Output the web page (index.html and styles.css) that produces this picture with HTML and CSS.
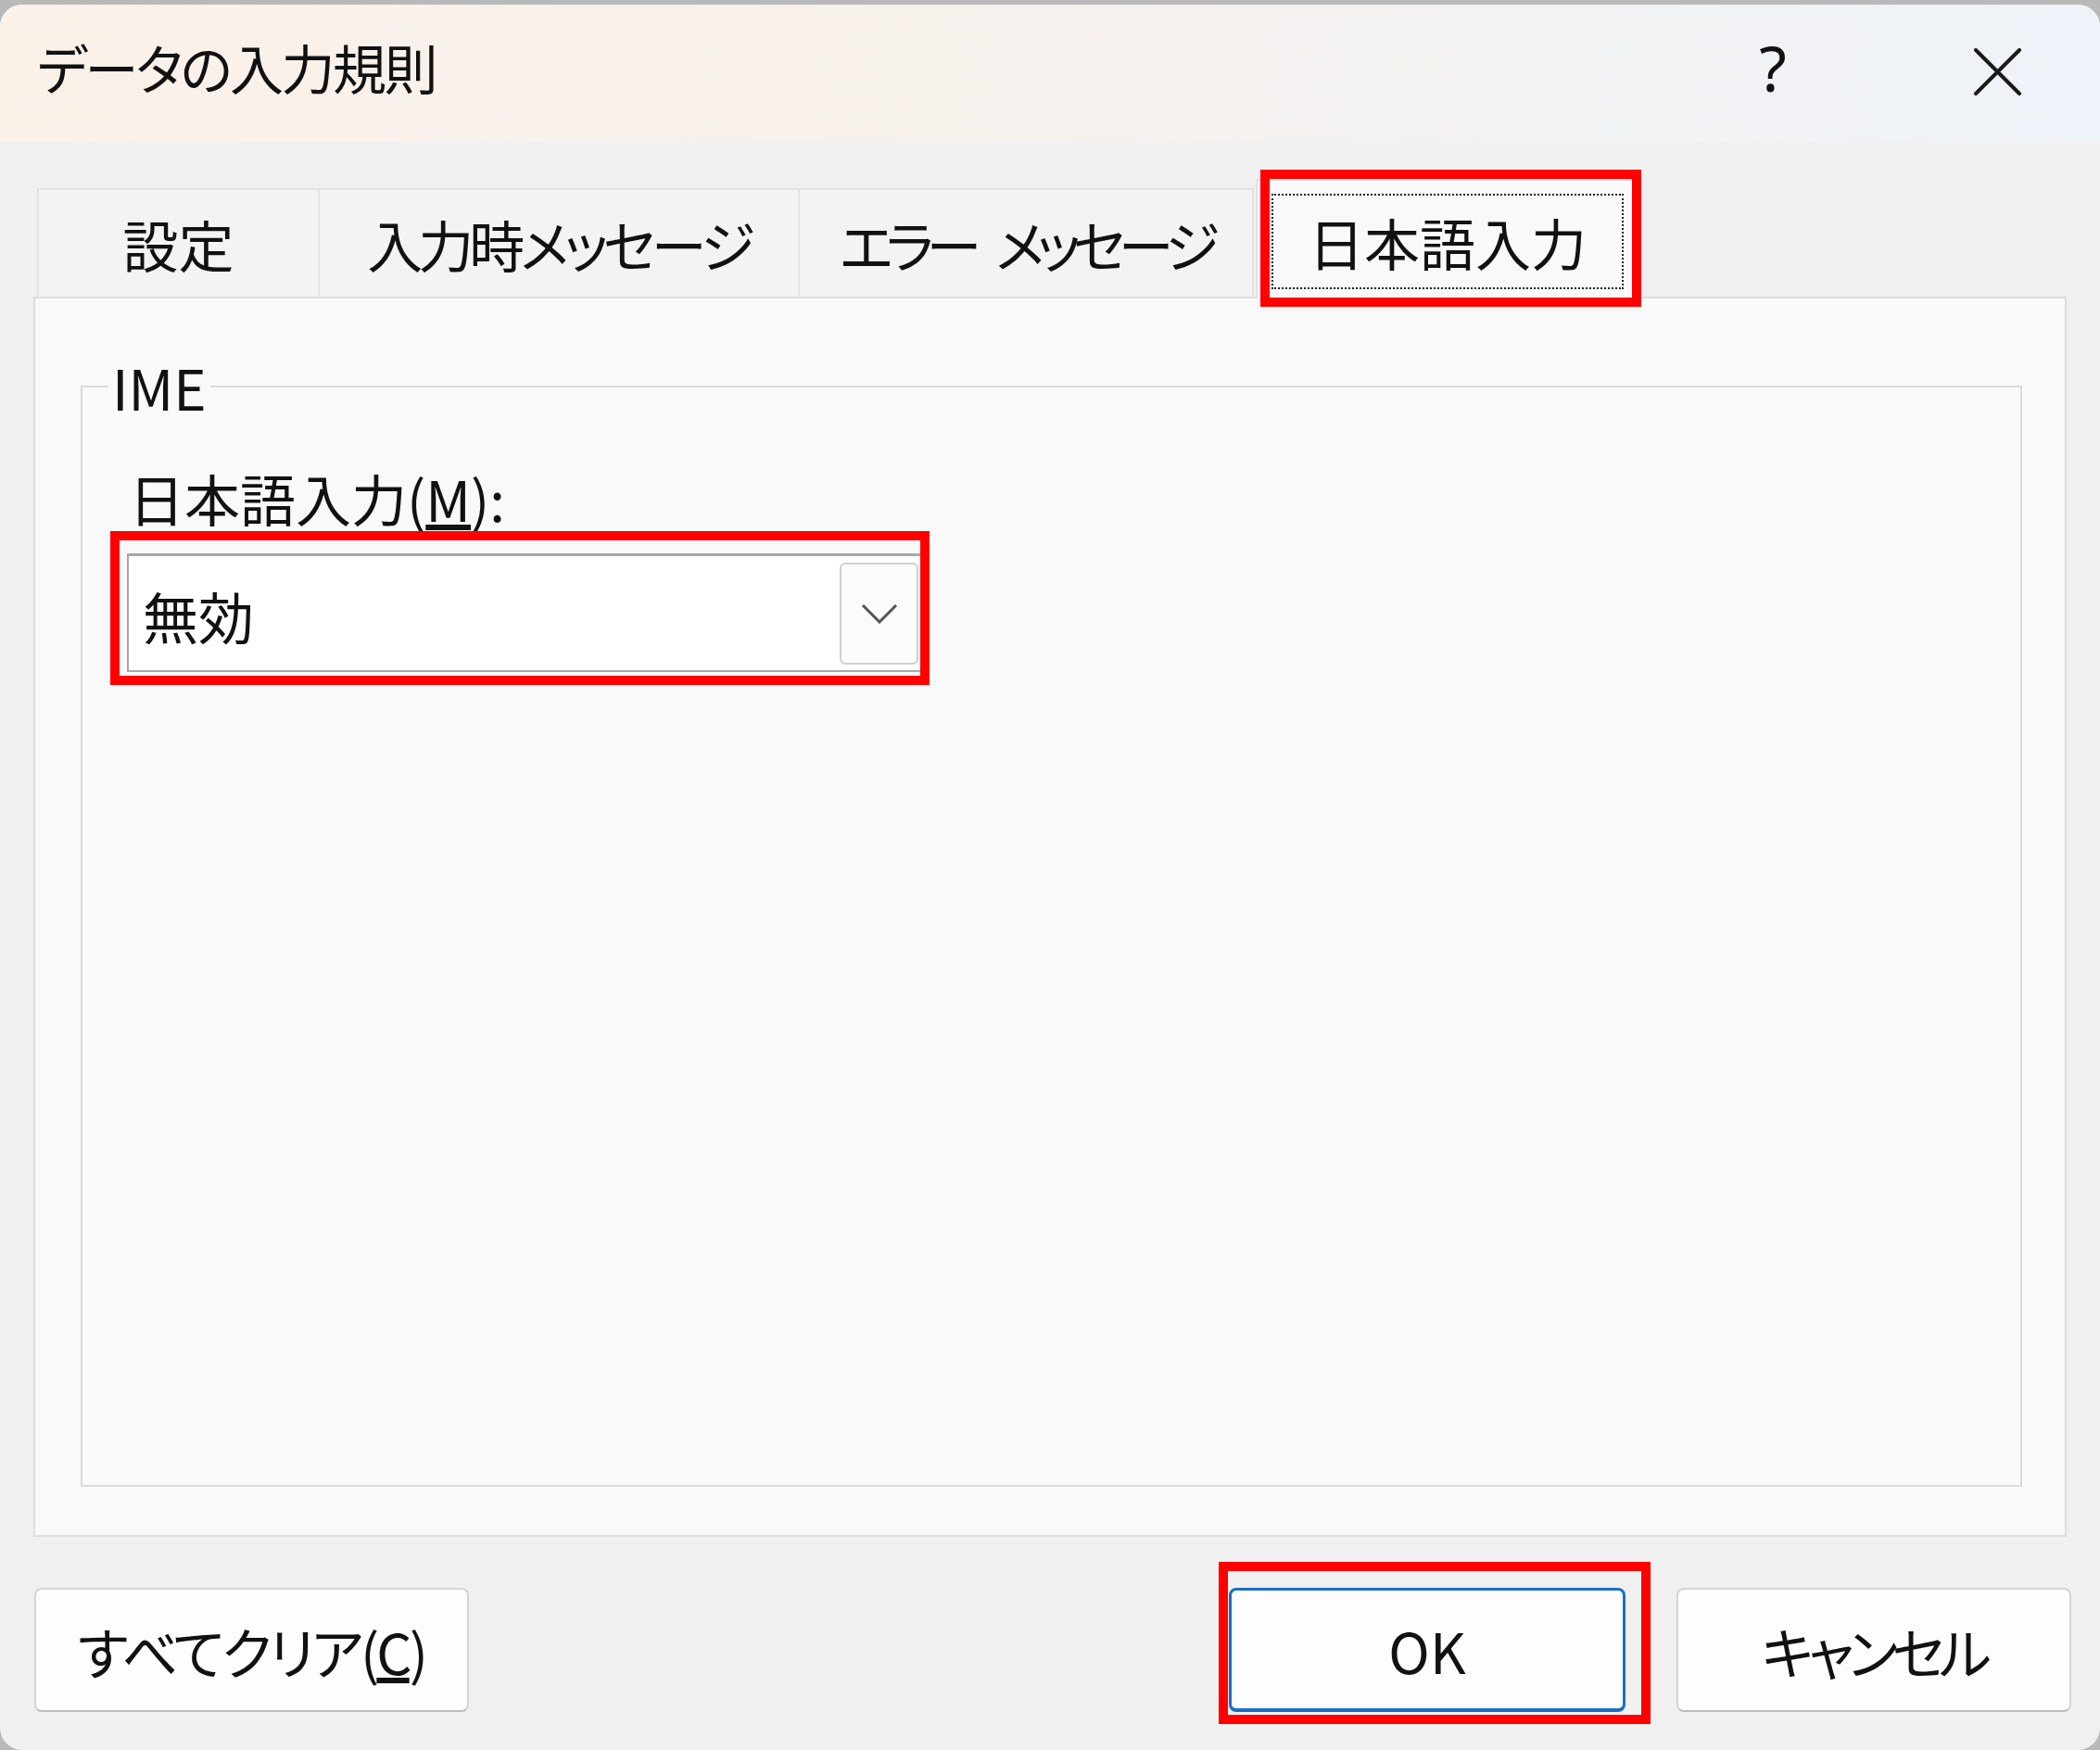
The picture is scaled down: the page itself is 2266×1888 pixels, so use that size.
FILE: index.html
```html
<!DOCTYPE html>
<html lang="ja">
<head>
<meta charset="utf-8">
<title>データの入力規則</title>
<link rel="stylesheet" href="styles.css">
</head>
<body>
<div class="dialog">
  <div class="titlebar">
    <div class="title">データの入力規則</div>
    <div class="tb-btns">
      <span class="help">?</span>
      <span class="close"><svg width="53" height="51" viewBox="0 0 53 51"><path d="M3 2 L50 49 M50 2 L3 49" stroke="#1a1a1a" stroke-width="4" stroke-linecap="round" fill="none"/></svg></span>
    </div>
  </div>
  <div class="content">
    <div class="tabs">
      <div class="tab t1">設定</div>
      <div class="tab t2">入力時メッセージ</div>
      <div class="tab t3">エラー メッセージ</div>
      <div class="tab sel"><span class="focus">日本語入力</span><span class="mark mark-tab"></span></div>
    </div>
    <div class="panel">
      <fieldset class="group">
        <legend>IME</legend>
        <div class="inner">
          <div class="label">日本語入力(<u>M</u>):</div>
          <div class="combo-wrap">
            <div class="combo">
              <span class="val">無効</span>
              <span class="drop"><svg width="40" height="22" viewBox="0 0 40 22"><polyline points="2,2 20,20 38,2" stroke="#555" stroke-width="3" fill="none"/></svg></span>
            </div>
            <span class="mark mark-combo"></span>
          </div>
        </div>
      </fieldset>
    </div>
    <div class="buttons">
      <button class="btn clear">すべてクリア(<u>C</u>)</button>
      <div class="right">
        <span class="okwrap"><button class="btn ok">OK</button><span class="mark mark-ok"></span></span>
        <button class="btn cancel">キャンセル</button>
      </div>
    </div>
  </div>
</div>
</body>
</html>
```
FILE: styles.css
```css
* { box-sizing: border-box; }
html, body { margin: 0; padding: 0; }
body {
  width: 2266px;
  height: 1888px;
  overflow: hidden;
  background: #b9b9b9;
  font-family: "Noto Sans CJK JP", "Noto Sans", sans-serif;
  font-feature-settings: "palt";
  color: #111;
}
.dialog {
  margin-top: 5px;
  height: 1883px;
  background: #f0f0f0;
  border-radius: 24px;
  overflow: hidden;
}
.titlebar {
  height: 148px;
  display: flex;
  justify-content: space-between;
  align-items: flex-start;
  background: linear-gradient(90deg, #faf1e9 0%, #f7f1ec 45%, #eef3f9 100%);
  padding-left: 40px;
  padding-right: 51px;
}
.title { font-size: 58px; line-height: 135px; letter-spacing: -2.5px; }
.tb-btns { display: flex; gap: 122px; }
.help, .close {
  width: 120px;
  height: 135px;
  display: flex;
  align-items: center;
  justify-content: center;
}
.help { font-size: 68px; line-height: 135px; font-family: "Noto Sans", sans-serif; font-weight: 400; }
.close svg { margin-top: 9px; }
.content { padding: 0 36px; }
.tabs {
  height: 167px;
  display: flex;
  align-items: flex-end;
  padding-left: 4px;
}
.tab {
  height: 117px;
  display: flex;
  align-items: center;
  justify-content: center;
  font-size: 60px;
  background: #f3f3f3;
  border-top: 2px solid #e3e3e3;
  border-left: 2px solid #e3e3e3;
}
.t1 { width: 303px; }
.t2 { width: 518px; letter-spacing: -5px; }
.t3 { width: 492px; border-right: 2px solid #e3e3e3; letter-spacing: -8px; word-spacing: 18px; white-space: pre; }
.tab.sel {
  position: relative;
  z-index: 1;
  width: 410px;
  height: 129px;
  margin-left: 2px;
  margin-bottom: -2px;
  background: #f9f9f9;
  border-right: 2px solid #e3e3e3;
  align-items: stretch;
  padding: 14px 11px 10px 15px;
}
.focus {
  flex: 1;
  border: 2px dotted #222;
  display: flex;
  align-items: center;
  justify-content: center;
}
.mark {
  position: absolute;
  border: 10px solid #ff0000;
  pointer-events: none;
}
.mark-tab { left: 3px; top: -12px; width: 411px; height: 148px; }
.panel {
  height: 1338px;
  background: #f9f9f9;
  border: 2px solid #dddddd;
  display: flex;
  flex-direction: column;
}
.group {
  flex: 1;
  margin: 65px 46px 52px 49px;
  border: 2px solid #dadada;
  padding: 0;
  min-width: 0;
}
.group legend {
  font-size: 60px;
  line-height: 60px;
  padding: 0 4px;
  margin-left: 28px;
}
.inner { padding-left: 48px; }
.label {
  font-size: 60px;
  line-height: 70px;
  margin-top: 55px;
  padding-left: 2px;
}
.combo-wrap { position: relative; margin-top: 25px; width: 858px; }
.combo {
  height: 128px;
  background: #fff;
  border: 2px solid #a8a8a8;
  border-top-width: 3px;
  display: flex;
  align-items: center;
  justify-content: space-between;
  padding: 0 2px 0 15px;
  font-size: 60px;
}
.val { line-height: 1; padding-top: 4px; }
.drop {
  width: 85px;
  height: 110px;
  border: 2px solid #d0d0d0;
  border-radius: 6px;
  background: #fbfbfb;
  display: flex;
  align-items: center;
  justify-content: center;
}
.mark-combo { left: -18px; top: -24px; width: 884px; height: 166px; }
.buttons {
  display: flex;
  justify-content: space-between;
  margin-top: 55px;
  margin-right: -5px;
  padding-left: 1px;
}
.btn {
  height: 134px;
  font-family: inherit;
  font-feature-settings: "palt";
  font-size: 60px;
  background: #fdfdfd;
  border: 2px solid #d5d5d5;
  border-bottom-color: #bcbcbc;
  border-radius: 8px;
  color: #111;
  padding: 0;
}
.clear { width: 469px; letter-spacing: -3px; }
.right { display: flex; gap: 55px; }
.okwrap { position: relative; display: flex; }
.ok { width: 428px; border: 3px solid #1a6fc4; border-bottom-width: 4px; }
.cancel { width: 426px; letter-spacing: -6px; }
.mark-ok { left: -11px; top: -28px; width: 466px; height: 175px; }
```
